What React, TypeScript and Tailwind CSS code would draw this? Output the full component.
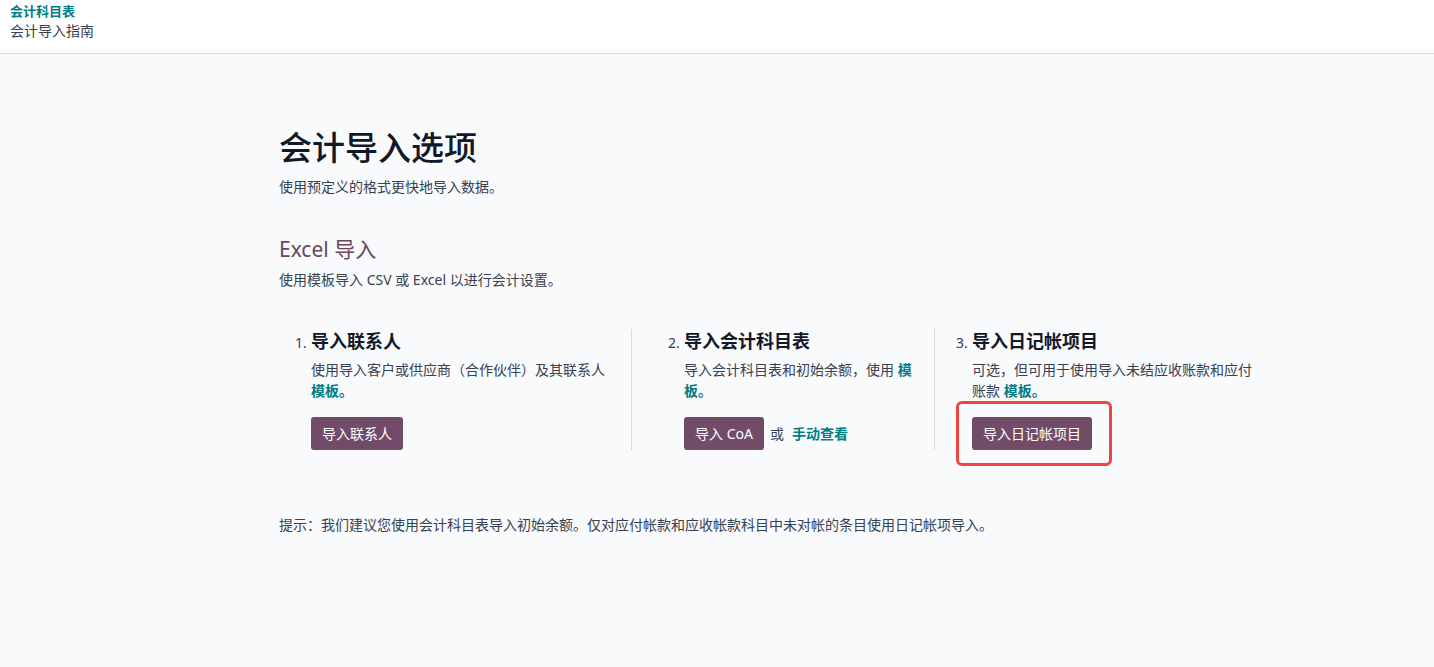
import React from "react";

const font = { fontFamily: '"Noto Sans", "Noto Sans CJK SC", sans-serif' };

function Step({
  n,
  title,
  children,
  className,
}: {
  n: number;
  title: string;
  children: React.ReactNode;
  className: string;
}) {
  return (
    <div className={className}>
      <div className="flex items-baseline">
        <span className="w-4 shrink-0 text-[14px] text-[#374151]">{n}.</span>
        <div className="flex-1">
          <h3 className="text-[18px] font-bold leading-6 text-[#111827]">{title}</h3>
          {children}
        </div>
      </div>
    </div>
  );
}

function Btn({ children }: { children: React.ReactNode }) {
  return (
    <button className="rounded-[3px] bg-[#714b67] px-[11px] py-[6px] text-[14px] leading-[21px] text-white">
      {children}
    </button>
  );
}

export default function App() {
  return (
    <div className="min-h-screen bg-[#f9fafb]" style={font}>
      <header className="h-[54px] border-b border-[#d8dadd] bg-white pl-[10px] pt-[2px]">
        <div className="text-[13px] font-bold leading-[18px] text-[#017e84]">会计科目表</div>
        <div className="text-[14px] leading-[21px] text-[#374151]">会计导入指南</div>
      </header>

      <main className="pl-[279px] pt-[73px]">
        <h1 className="text-[33px] font-medium leading-[41px] text-[#111827]">会计导入选项</h1>
        <p className="mt-[8px] text-[14px] leading-[21px] text-[#374151]">使用预定义的格式更快地导入数据。</p>

        <h2 className="mt-[38px] text-[21px] leading-[28px] text-[#6b4761]">Excel 导入</h2>
        <p className="mt-[6px] text-[14px] leading-[21px] text-[#374151]">使用模板导入 CSV 或 Excel 以进行会计设置。</p>

        <div className="mt-[39px] flex text-[14px] leading-[21px] text-[#374151]">
          <Step n={1} title="导入联系人" className="w-[353px] border-r border-[#d8dadd] pl-4 pr-5">
            <p className="mt-[6px]">
              使用导入客户或供应商（合作伙伴）及其联系人 <a className="font-bold text-[#017e84]">模板。</a>
            </p>
            <div className="mt-4">
              <Btn>导入联系人</Btn>
            </div>
          </Step>

          <Step n={2} title="导入会计科目表" className="w-[303px] border-r border-[#d8dadd] pl-9 pr-4">
            <p className="mt-[6px]">
              导入会计科目表和初始余额，使用 <a className="font-bold text-[#017e84]">模板。</a>
            </p>
            <div className="mt-4 flex items-center gap-[6px]">
              <Btn>导入 CoA</Btn>
              <span>或</span>
              <a className="ml-[2px] font-bold text-[#017e84]">手动查看</a>
            </div>
          </Step>

          <Step n={3} title="导入日记帐项目" className="w-[341px] pl-[21px] pr-4">
            <p className="mt-[6px]">
              可选，但可用于使用导入未结应收账款和应付账款 <a className="font-bold text-[#017e84]">模板。</a>
            </p>
            <div className="mt-4">
              <div className="relative inline-block">
                <Btn>导入日记帐项目</Btn>
                <div className="pointer-events-none absolute -bottom-4 -left-4 -right-5 -top-4 rounded-[6px] border-[3px] border-[#ef4444]" />
              </div>
            </div>
          </Step>
        </div>

        <p className="mt-[64px] text-[14px] leading-[21px] text-[#374151]">
          提示：我们建议您使用会计科目表导入初始余额。仅对应付帐款和应收帐款科目中未对帐的条目使用日记帐项导入。
        </p>
      </main>
    </div>
  );
}
